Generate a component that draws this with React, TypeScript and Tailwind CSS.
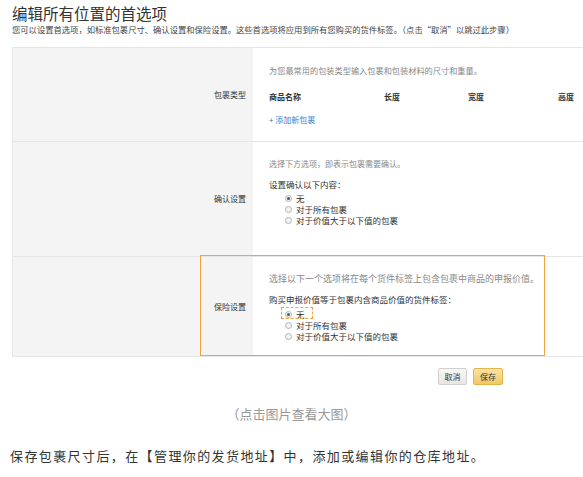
import React from 'react';

const font = { fontFamily: '"Noto Sans CJK SC", "Noto Sans", sans-serif' };

function Radio({ checked, label }: { checked?: boolean; label: string }) {
  return (
    <div className="flex items-center h-[11px]">
      <span className="w-[7px] h-[7px] rounded-full border border-[#b5b5b5] bg-[#f2f2f2] flex items-center justify-center mr-[4px]">
        {checked && <span className="w-[3px] h-[3px] rounded-full bg-[#555]" />}
      </span>
      <span className="text-[8.5px] leading-[11px] text-[#333]">{label}</span>
    </div>
  );
}

function Row({ label, height, children }: { label: string; height: string; children: React.ReactNode }) {
  return (
    <div className={`flex border-b border-[#e6e6e6] ${height}`}>
      <div className="w-[240px] shrink-0 bg-[#f4f4f4] flex items-center justify-end pr-[7px]">
        <span className="text-[8px] text-[#333]">{label}</span>
      </div>
      <div className="flex-1 pl-[16px] pt-[17px]">{children}</div>
    </div>
  );
}

export default function App() {
  return (
    <div className="relative w-[583px] h-[477px] overflow-hidden bg-white" style={font}>
      {/* Header */}
      <div className="pl-[12px] pt-[3px]">
        <h1 className="text-[15.5px] leading-[20px] text-[#333]">编辑所有位置的首选项</h1>
        <p className="text-[8.3px] leading-[10px] text-[#444] mt-[1px] whitespace-nowrap">
          您可以设置首选项，如标准包裹尺寸、确认设置和保险设置。这些首选项将应用到所有您购买的货件标签。（点击“取消”以跳过此步骤）
        </p>
      </div>

      {/* Settings table */}
      <div className="ml-[12px] mt-[13px] w-[590px] border-t border-l border-[#e6e6e6]">
        <Row label="包裹类型" height="h-[94px]">
          <p className="text-[8.2px] leading-[10px] text-[#888]">为您最常用的包装类型输入包裹和包装材料的尺寸和重量。</p>
          <div className="flex mt-[17px] text-[8px] leading-[10px] font-bold text-[#333]">
            <span className="w-[115px]">商品名称</span>
            <span className="w-[84px]">长度</span>
            <span className="w-[90px]">宽度</span>
            <span>高度</span>
          </div>
          <p className="mt-[13px] text-[8px] leading-[10px] text-[#3a7cc7]">+ 添加新包裹</p>
        </Row>
        <Row label="确认设置" height="h-[115px]">
          <p className="text-[8px] leading-[10px] text-[#888]">选择下方选项，即表示包裹需要确认。</p>
          <p className="mt-[10px] text-[8.5px] leading-[10px] text-[#333]">设置确认以下内容：</p>
          <div className="pl-[16px] mt-[4px]">
            <Radio checked label="无" />
            <Radio label="对于所有包裹" />
            <Radio label="对于价值大于以下值的包裹" />
          </div>
        </Row>
        <Row label="保险设置" height="h-[100px]">
          <p className="text-[9px] leading-[10px] text-[#888] whitespace-nowrap">选择以下一个选项将在每个货件标签上包含包裹中商品的申报价值。</p>
          <p className="mt-[10px] text-[8.5px] leading-[10px] text-[#333]">购买申报价值等于包裹内含商品价值的货件标签：</p>
          <div className="pl-[16px] mt-[5px]">
            <Radio checked label="无" />
            <Radio label="对于所有包裹" />
            <Radio label="对于价值大于以下值的包裹" />
          </div>
        </Row>
      </div>

      {/* Annotation highlight */}
      <div className="absolute left-[200px] top-[255px] w-[345px] h-[101px] border-[1.5px] border-[#f0a53c] pointer-events-none" />
      <div className="absolute left-[281px] top-[307px] w-[32px] h-[12px] border border-dashed border-[#f0a53c] pointer-events-none" />

      {/* Actions */}
      <div className="flex gap-[6px] pl-[438px] mt-[11px]">
        <button className="w-[29px] h-[17px] text-[8px] text-[#333] border border-[#d0d0d0] bg-gradient-to-b from-[#f8f8f8] to-[#e6e6e6] rounded-[2px]">
          取消
        </button>
        <button className="w-[30px] h-[17px] text-[8px] text-[#333] border border-[#e3b64d] bg-gradient-to-b from-[#f9e3a3] to-[#f1c95e] rounded-[2px]">
          保存
        </button>
      </div>

      <p className="text-center text-[13px] leading-[16px] text-[#999] mt-[21px]">（点击图片查看大图）</p>

      <p className="pl-[10px] mt-[25px] text-[13px] leading-[18px] text-[#333] tracking-[1.4px] whitespace-nowrap">
        保存包裹尺寸后，在【管理你的发货地址】中，添加或编辑你的仓库地址。
      </p>
    </div>
  );
}
